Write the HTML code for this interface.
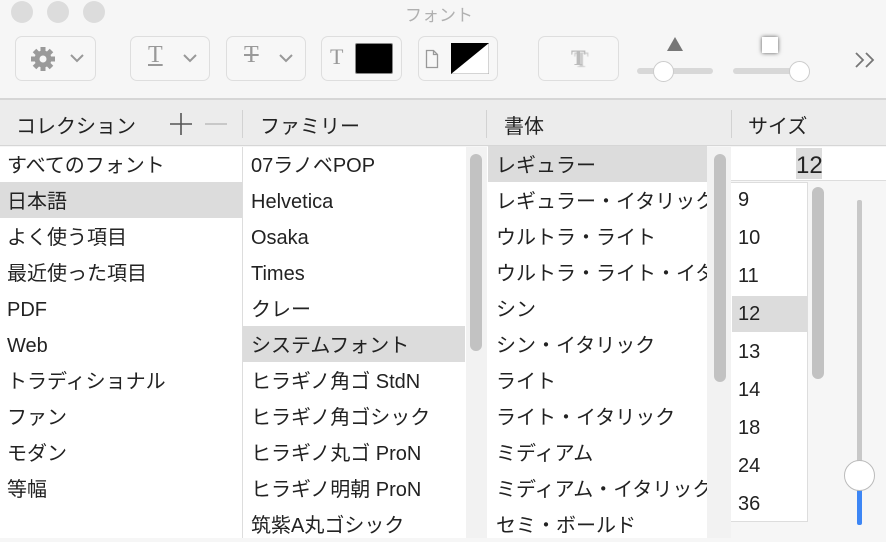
<!DOCTYPE html>
<html><head><meta charset="utf-8"><style>
*{margin:0;padding:0;box-sizing:border-box}
body{width:886px;height:538px;overflow:hidden;background:#f6f6f6;font-family:"Liberation Sans","Noto Sans CJK JP",sans-serif;position:relative;color:#222}
.a{position:absolute}
.dot{width:22px;height:22px;border-radius:50%;background:#dcdcdc;top:1px}
.btn{top:36px;height:45px;border:1px solid #dedede;border-radius:7px;background:#f7f7f7}
.row{position:absolute;height:36px;line-height:36px;font-size:20px;white-space:nowrap;overflow:hidden}
.t{position:absolute;height:36px;line-height:40px;font-size:20px;white-space:nowrap;overflow:hidden}
.sel{background:#dcdcdc}
.track{background:#f2f2f2}
.thumb{background:#c2c2c2;border-radius:7px;width:12px}
</style></head><body>
<div class="a dot" style="left:11px"></div>
<div class="a dot" style="left:47px"></div>
<div class="a dot" style="left:83px"></div>
<div class="a" style="left:405px;top:1px;font-size:17px;color:#b0b0b0">フォント</div>

<div class="a btn" style="left:15px;width:81px"></div>
<svg class="a" style="left:29px;top:45px" width="28" height="28" viewBox="0 0 28 28"><g fill="#9a9a9a" transform="translate(14 14)"><circle r="8.5"/><g id="t"><rect x="-2.5" y="-12" width="5" height="6"/></g><use href="#t" transform="rotate(45)"/><use href="#t" transform="rotate(90)"/><use href="#t" transform="rotate(135)"/><use href="#t" transform="rotate(180)"/><use href="#t" transform="rotate(225)"/><use href="#t" transform="rotate(270)"/><use href="#t" transform="rotate(315)"/></g><circle cx="14" cy="14" r="3.5" fill="#f7f7f7"/></svg>
<svg class="a" style="left:70px;top:54px" width="14" height="9"><path d="M1 1l6 6 6-6" stroke="#999" stroke-width="2" fill="none"/></svg>

<div class="a btn" style="left:130px;width:80px"></div>
<div class="a" style="left:148px;top:42px;font-family:'Liberation Serif',serif;font-size:24px;color:#999;text-decoration:underline">T</div>
<svg class="a" style="left:183px;top:54px" width="14" height="9"><path d="M1 1l6 6 6-6" stroke="#999" stroke-width="2" fill="none"/></svg>

<div class="a btn" style="left:226px;width:80px"></div>
<div class="a" style="left:244px;top:42px;font-family:'Liberation Serif',serif;font-size:24px;color:#999;text-decoration:line-through">T</div>
<svg class="a" style="left:279px;top:54px" width="14" height="9"><path d="M1 1l6 6 6-6" stroke="#999" stroke-width="2" fill="none"/></svg>

<div class="a btn" style="left:321px;width:81px"></div>
<div class="a" style="left:330px;top:44px;font-family:'Liberation Serif',serif;font-size:22px;color:#999">T</div>
<div class="a" style="left:355px;top:43px;width:38px;height:31px;background:#000;border:1px solid #888;border-radius:2px"></div>

<div class="a btn" style="left:418px;width:80px"></div>
<svg class="a" style="left:425px;top:49px" width="14" height="20"><path d="M1.5 1.5h7l4 4v13h-11z M8.5 1.5v4h4" stroke="#999" stroke-width="1.3" fill="none"/></svg>
<svg class="a" style="left:451px;top:43px" width="38" height="31"><rect width="38" height="31" fill="#fff" stroke="#aaa"/><path d="M0 0H38L0 31Z" fill="#000"/></svg>

<div class="a btn" style="left:538px;width:81px"></div>
<div class="a" style="left:571px;top:45px;font-family:'Liberation Serif',serif;font-size:22px;color:#bbb;font-weight:bold;text-shadow:3px 2px 1px #ccc">T</div>

<svg class="a" style="left:665px;top:36px" width="20" height="16"><path d="M10 1L18 15H2Z" fill="#777"/></svg>
<div class="a" style="left:637px;top:68px;width:76px;height:6px;border-radius:3px;background:#d8d8d8"></div>
<div class="a" style="left:653px;top:61px;width:21px;height:21px;border-radius:50%;background:#fff;border:1px solid #ccc"></div>
<div class="a" style="left:762px;top:37px;width:16px;height:16px;background:#fff;box-shadow:0 0 4px #555"></div>
<div class="a" style="left:733px;top:68px;width:76px;height:6px;border-radius:3px;background:#d8d8d8"></div>
<div class="a" style="left:789px;top:61px;width:21px;height:21px;border-radius:50%;background:#fff;border:1px solid #ccc"></div>
<svg class="a" style="left:854px;top:51px" width="24" height="18"><path d="M2 2l7 7-7 7M12 2l7 7-7 7" stroke="#777" stroke-width="1.8" fill="none"/></svg>

<div class="a" style="left:0;top:98px;width:886px;height:2px;background:#d6d6d6"></div>
<div class="a" style="left:0;top:100px;width:886px;height:46px;background:#ececec;border-bottom:1px solid #d6d6d6"></div>
<div class="a" style="left:242px;top:110px;width:1px;height:28px;background:#d2d2d2"></div>
<div class="a" style="left:486px;top:110px;width:1px;height:28px;background:#d2d2d2"></div>
<div class="a" style="left:731px;top:110px;width:1px;height:28px;background:#d2d2d2"></div>
<div class="a" style="left:16px;top:110px;font-size:20px">コレクション</div>
<svg class="a" style="left:168px;top:111px" width="62" height="24"><path d="M13 2v22M2 13h22" stroke="#555" stroke-width="1.6"/><path d="M37 13h22" stroke="#bbb" stroke-width="1.6"/></svg>
<div class="a" style="left:260px;top:110px;font-size:20px">ファミリー</div>
<div class="a" style="left:504px;top:110px;font-size:20px">書体</div>
<div class="a" style="left:748px;top:110px;font-size:20px">サイズ</div>

<div class="a" style="left:0;top:147px;width:242px;height:391px;background:#fff"></div>
<div class="a" style="left:242px;top:147px;width:1px;height:391px;background:#ddd"></div>
<div class="a" style="left:243px;top:147px;width:223px;height:391px;background:#fff"></div>
<div class="a track" style="left:466px;top:147px;width:21px;height:391px"></div>
<div class="a thumb" style="left:470px;top:154px;height:197px"></div>
<div class="a" style="left:487px;top:147px;width:220px;height:391px;background:#fff"></div>
<div class="a track" style="left:707px;top:147px;width:24px;height:391px"></div>
<div class="a thumb" style="left:714px;top:154px;height:228px"></div>

<div class="a" style="left:731px;top:147px;width:155px;height:34px;background:#fff;border-bottom:1px solid #ddd"></div>
<div class="a" style="left:796px;top:148px;width:26px;height:31px;background:#dcdcdc"></div>
<div class="a" style="left:796px;top:150px;font-size:24px;line-height:32px">12</div>
<div class="a" style="left:731px;top:182px;width:77px;height:340px;background:#fff;border:1px solid #ddd;border-left:none"></div>
<div class="a thumb" style="left:812px;top:187px;height:192px"></div>
<div class="a" style="left:857px;top:200px;width:5px;height:275px;background:#c8c8c8;border-radius:2px"></div>
<div class="a" style="left:857px;top:485px;width:5px;height:40px;background:#3d86f5;border-radius:2px"></div>
<div class="a" style="left:844px;top:460px;width:31px;height:31px;border-radius:50%;background:#fff;border:1px solid #bbb"></div>

<div class="row sel" style="left:0;top:182px;width:242px"></div>
<div class="row sel" style="left:243px;top:326px;width:222px"></div>
<div class="row sel" style="left:488px;top:146px;width:219px"></div>
<div class="row sel" style="left:732px;top:296px;width:75px"></div>

<div class="t" style="left:7px;top:146px">すべてのフォント</div>
<div class="t" style="left:7px;top:182px">日本語</div>
<div class="t" style="left:7px;top:218px">よく使う項目</div>
<div class="t" style="left:7px;top:254px">最近使った項目</div>
<div class="t" style="left:7px;top:290px">PDF</div>
<div class="t" style="left:7px;top:326px">Web</div>
<div class="t" style="left:7px;top:362px">トラディショナル</div>
<div class="t" style="left:7px;top:398px">ファン</div>
<div class="t" style="left:7px;top:434px">モダン</div>
<div class="t" style="left:7px;top:470px">等幅</div>

<div class="t" style="left:251px;top:146px">07ラノベPOP</div>
<div class="t" style="left:251px;top:182px">Helvetica</div>
<div class="t" style="left:251px;top:218px">Osaka</div>
<div class="t" style="left:251px;top:254px">Times</div>
<div class="t" style="left:251px;top:290px">クレー</div>
<div class="t" style="left:251px;top:326px">システムフォント</div>
<div class="t" style="left:251px;top:362px">ヒラギノ角ゴ StdN</div>
<div class="t" style="left:251px;top:398px">ヒラギノ角ゴシック</div>
<div class="t" style="left:251px;top:434px">ヒラギノ丸ゴ ProN</div>
<div class="t" style="left:251px;top:470px">ヒラギノ明朝 ProN</div>
<div class="t" style="left:251px;top:506px">筑紫A丸ゴシック</div>

<div class="t" style="left:496px;top:146px">レギュラー</div>
<div class="t" style="left:496px;top:182px;width:211px">レギュラー・イタリック</div>
<div class="t" style="left:496px;top:218px">ウルトラ・ライト</div>
<div class="t" style="left:496px;top:254px;width:211px">ウルトラ・ライト・イタリック</div>
<div class="t" style="left:496px;top:290px">シン</div>
<div class="t" style="left:496px;top:326px">シン・イタリック</div>
<div class="t" style="left:496px;top:362px">ライト</div>
<div class="t" style="left:496px;top:398px">ライト・イタリック</div>
<div class="t" style="left:496px;top:434px">ミディアム</div>
<div class="t" style="left:496px;top:470px;width:211px">ミディアム・イタリック</div>
<div class="t" style="left:496px;top:506px">セミ・ボールド</div>

<div class="t" style="left:738px;top:180px">9</div>
<div class="t" style="left:738px;top:218px">10</div>
<div class="t" style="left:738px;top:256px">11</div>
<div class="t" style="left:738px;top:294px">12</div>
<div class="t" style="left:738px;top:332px">13</div>
<div class="t" style="left:738px;top:370px">14</div>
<div class="t" style="left:738px;top:408px">18</div>
<div class="t" style="left:738px;top:446px">24</div>
<div class="t" style="left:738px;top:484px">36</div>
</body></html>
